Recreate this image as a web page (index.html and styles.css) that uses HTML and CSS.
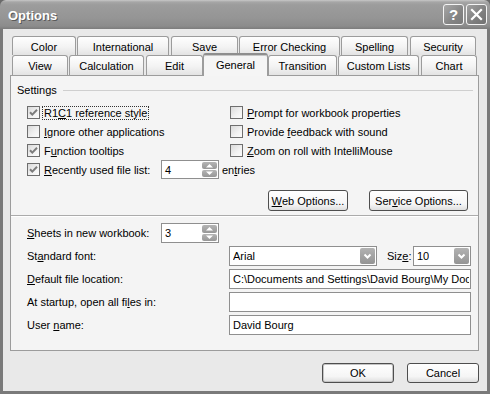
FILE: index.html
```html
<!DOCTYPE html>
<html>
<head>
<meta charset="utf-8">
<link rel="stylesheet" href="styles.css">
</head>
<body>
<div class="window">
  <div class="titlebar">
    <span class="title">Options</span>
    <div class="tb-btns">
      <span class="tb-btn help">?</span>
      <span class="tb-btn close"><svg width="13" height="13" viewBox="0 0 13 13"><path d="M2 2 L11 11 M11 2 L2 11" stroke="#fff" stroke-width="2.2" stroke-linecap="square" fill="none"/></svg></span>
    </div>
  </div>
  <div class="client">
    <div class="tabctl">
      <div class="tabrow back">
        <span class="tab t-color">Color</span>
        <span class="tab t-intl">International</span>
        <span class="tab t-save">Save</span>
        <span class="tab t-err">Error Checking</span>
        <span class="tab t-spell">Spelling</span>
        <span class="tab t-sec">Security</span>
      </div>
      <div class="tabrow front">
        <span class="tab t-view">View</span>
        <span class="tab t-calc">Calculation</span>
        <span class="tab t-edit">Edit</span>
        <span class="tab t-gen sel">General</span>
        <span class="tab t-trans">Transition</span>
        <span class="tab t-custom">Custom Lists</span>
        <span class="tab t-chart">Chart</span>
      </div>
      <div class="panel">
        <div class="legend"><span>Settings</span><span class="rule"></span></div>
        <div class="checks">
          <label class="cb"><span class="box"><svg width="11" height="11" viewBox="0 0 11 11"><path d="M2 5.2 L4.3 7.6 L9 2.8" stroke="#7c7c7c" stroke-width="2" fill="none"/></svg></span><span class="focus">R1<u>C</u>1 reference style</span></label>
          <label class="cb"><span class="box"></span><span><u>P</u>rompt for workbook properties</span></label>
          <label class="cb"><span class="box"></span><span><u>I</u>gnore other applications</span></label>
          <label class="cb"><span class="box"></span><span>Provide <u>f</u>eedback with sound</span></label>
          <label class="cb"><span class="box"><svg width="11" height="11" viewBox="0 0 11 11"><path d="M2 5.2 L4.3 7.6 L9 2.8" stroke="#7c7c7c" stroke-width="2" fill="none"/></svg></span><span>F<u>u</u>nction tooltips</span></label>
          <label class="cb"><span class="box"></span><span><u>Z</u>oom on roll with IntelliMouse</span></label>
          <div class="recent">
            <label class="cb recent-lbl"><span class="box"><svg width="11" height="11" viewBox="0 0 11 11"><path d="M2 5.2 L4.3 7.6 L9 2.8" stroke="#7c7c7c" stroke-width="2" fill="none"/></svg></span><span><u>R</u>ecently used file list:</span></label>
            <div class="spin"><span class="val">4</span><span class="spin-btns"><span class="sb"><svg width="9" height="5" viewBox="0 0 9 5"><path d="M1 4.5 L4.5 1 L8 4.5Z" fill="#fff"/></svg></span><span class="sb"><svg width="9" height="5" viewBox="0 0 9 5"><path d="M1 0.5 L4.5 4 L8 0.5Z" fill="#fff"/></svg></span></span></div>
            <span class="entries">en<u>t</u>ries</span>
          </div>
        </div>
        <div class="btnrow">
          <span class="btn web"><u>W</u>eb Options...</span>
          <span class="btn svc">Ser<u>v</u>ice Options...</span>
        </div>
        <div class="sep"></div>
        <div class="form">
          <div class="frow">
            <span class="flabel short"><u>S</u>heets in new workbook:</span>
            <div class="spin"><span class="val">3</span><span class="spin-btns"><span class="sb"><svg width="9" height="5" viewBox="0 0 9 5"><path d="M1 4.5 L4.5 1 L8 4.5Z" fill="#fff"/></svg></span><span class="sb"><svg width="9" height="5" viewBox="0 0 9 5"><path d="M1 0.5 L4.5 4 L8 0.5Z" fill="#fff"/></svg></span></span></div>
          </div>
          <div class="frow">
            <span class="flabel">St<u>a</u>ndard font:</span>
            <div class="input combo font"><span class="val">Arial</span><span class="dd"><svg width="11" height="11" viewBox="0 0 11 11"><path d="M2.5 3.5 L5.5 6.5 L8.5 3.5" stroke="#fff" stroke-width="2" fill="none"/></svg></span></div>
            <span class="size-lbl">Siz<u>e</u>:</span>
            <div class="input combo size"><span class="val">10</span><span class="dd"><svg width="11" height="11" viewBox="0 0 11 11"><path d="M2.5 3.5 L5.5 6.5 L8.5 3.5" stroke="#fff" stroke-width="2" fill="none"/></svg></span></div>
          </div>
          <div class="frow">
            <span class="flabel"><u>D</u>efault file location:</span>
            <div class="input wide"><span class="val">C:\Documents and Settings\David Bourg\My Documents</span></div>
          </div>
          <div class="frow">
            <span class="flabel">At startup, open all fi<u>l</u>es in:</span>
            <div class="input wide"></div>
          </div>
          <div class="frow">
            <span class="flabel">User <u>n</u>ame:</span>
            <div class="input wide"><span class="val">David Bourg</span></div>
          </div>
        </div>
      </div>
    </div>
    <div class="footer">
      <span class="btn ok">OK</span>
      <span class="btn cancel">Cancel</span>
    </div>
  </div>
</div>
</body>
</html>
```
FILE: styles.css
```css
* { box-sizing: border-box; }
html, body { margin: 0; padding: 0; }
body {
  width: 490px; height: 394px; overflow: hidden;
  background: #6a6a6a;
  font-family: "Liberation Sans", Arial, sans-serif;
  font-size: 11px; color: #000;
}
u { text-decoration: underline; text-underline-offset: 1px; }
.window { width: 490px; height: 394px; display: flex; flex-direction: column; }

.titlebar {
  height: 29px; flex: none;
  display: flex; align-items: center; justify-content: space-between;
  padding: 0 3px 0 8px;
  border-radius: 6px 6px 0 0;
  background: linear-gradient(#c8c8c8 0, #a6a6a6 2px, #9c9c9c 5px, #959595 18px, #8c8c8c 26px, #7c7c7c 29px);
}
.title {
  color: #fff; font-weight: bold; font-size: 13px;
  text-shadow: 1px 1px 0 #5a5a5a;
  padding-top: 1px;
}
.tb-btns { display: flex; gap: 2px; }
.tb-btn {
  width: 21px; height: 21px;
  border: 1px solid #f4f4f4; border-radius: 3px;
  display: flex; align-items: center; justify-content: center;
  color: #fff; font-weight: bold; font-size: 15px;
  background: linear-gradient(135deg, #a8a8a8, #848484 60%, #7a7a7a);
}
.tb-btn.close { background: linear-gradient(135deg, #a0a0a0, #7e7e7e 60%, #727272); }

.client {
  flex: 1;
  border: 3px solid #7a7a7a; border-top: 0;
  background: #e9e9e9;
  padding: 7px 5px 0 7px;
  display: flex; flex-direction: column;
}
.tabctl { width: 469px; }
.tabrow { display: flex; padding-left: 2px; }
.back { height: 19px; }
.front { height: 20px; align-items: flex-end; }
.tab {
  height: 100%;
  border: 1px solid #9c9c9c; border-bottom: 0;
  border-radius: 3px 3px 0 0;
  background: linear-gradient(#fefefe, #f3f3f3 55%, #e3e3e3);
  display: flex; align-items: center; justify-content: center;
  white-space: nowrap; padding-top: 1px;
}
.back .tab { height: 19px; }
.front .tab { height: 20px; }
.t-color { width: 64px; margin-right: 1px; }
.t-intl { width: 92px; margin-right: 2px; }
.t-save { width: 67px; margin-right: 1px; }
.t-err { width: 101px; margin-right: 1px; }
.t-spell { width: 67px; margin-right: 2px; }
.t-sec { width: 66px; }
.t-view { width: 56px; margin-right: 1px; }
.t-calc { width: 75px; margin-right: 2px; }
.t-edit { width: 57px; }
.t-gen { width: 65px; }
.t-trans { width: 69px; margin-right: 1px; }
.t-custom { width: 81px; margin-right: 2px; }
.t-chart { width: 56px; }
.front .tab.sel {
  position: relative; z-index: 2;
  height: 23px; margin-bottom: -1px;
  background: #f5f5f5;
  border-top: 2px solid #8e8e8e;
  box-shadow: inset 0 1px 0 #c6c6c6;
  padding-top: 0; padding-bottom: 2px;
}

.panel {
  height: 276px;
  border: 1px solid #9c9c9c;
  background: #f4f4f4;
  display: flex; flex-direction: column;
}
.legend {
  display: flex; align-items: center;
  height: 14px; margin: 7px 5px 0 6px;
}
.legend .rule { flex: 1; height: 1px; background: #cfcfcf; margin-left: 6px; }
.checks {
  margin-top: 6px; padding-left: 16px;
  display: grid; grid-template-columns: 203px 1fr; grid-auto-rows: 19px;
}
.cb { display: flex; align-items: center; gap: 4px; white-space: nowrap; }
.box {
  width: 13px; height: 13px; flex: none;
  border: 1px solid #6e6e6e;
  background: linear-gradient(135deg, #dadada, #f2f2f2 60%, #fbfbfb);
  display: flex; align-items: center; justify-content: center;
}
.focus { outline: 1px dotted #333; outline-offset: 0; padding: 0 1px; margin-left: -1px; }
.recent { grid-column: 1 / span 2; display: flex; align-items: center; }
.recent-lbl { width: 134px; }
.entries { margin-left: 3px; }

.spin {
  width: 58px; height: 19px;
  border: 1px solid #8f8f8f; background: #fff;
  display: flex; align-items: center; justify-content: space-between;
  padding: 1px 1px 1px 3px;
}
.spin-btns { display: flex; flex-direction: column; gap: 1px; height: 100%; }
.sb {
  width: 15px; flex: 1;
  background: linear-gradient(#b4b4b4, #979797);
  border-radius: 2px;
  display: flex; align-items: center; justify-content: center;
}

.btnrow {
  margin-top: 11px; padding-right: 10px;
  display: flex; justify-content: flex-end; gap: 21px;
}
.btn {
  height: 21px;
  border: 1px solid #4e4e4e; border-radius: 3px;
  background: linear-gradient(#ffffff, #f5f5f5 70%, #dedede);
  display: flex; align-items: center; justify-content: center;
  white-space: nowrap;
}
.web { width: 80px; }
.svc { width: 99px; }

.sep { margin-top: 4px; height: 2px; border-top: 1px solid #ababab; border-bottom: 1px solid #ffffff; }

.form { margin-top: 6px; padding-left: 16px; display: flex; flex-direction: column; gap: 3px; }
.frow { display: flex; align-items: center; height: 20px; }
.flabel { width: 202px; white-space: nowrap; }
.flabel.short { width: 134px; }
.frow .spin { height: 20px; }
.input {
  height: 20px; border: 1px solid #8f8f8f; background: #fff;
  display: flex; align-items: center; justify-content: space-between;
  padding: 1px 1px 1px 3px; overflow: hidden; white-space: nowrap;
}
.input .val { overflow: hidden; }
.wide { width: 242px; }
.font { width: 148px; }
.size { width: 58px; }
.size-lbl { margin-left: 10px; width: 26px; }
.dd {
  width: 15px; height: 16px; flex: none;
  background: linear-gradient(#b2b2b2, #949494);
  border-radius: 2px;
  display: flex; align-items: center; justify-content: center;
}

.footer {
  margin-top: 12px; padding-right: 3px;
  display: flex; justify-content: flex-end; gap: 13px;
}
.ok, .cancel { width: 72px; height: 20px; }
.ok { box-shadow: inset 0 0 0 1px #c4c4c4; }
```
